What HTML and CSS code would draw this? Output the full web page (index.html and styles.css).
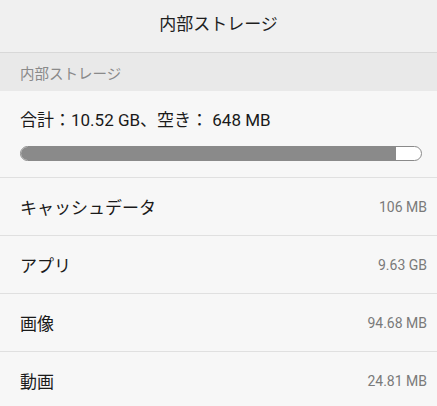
FILE: index.html
```html
<!DOCTYPE html>
<html lang="ja">
<head>
<meta charset="utf-8">
<link rel="stylesheet" href="styles.css">
</head>
<body>
<div class="screen">
  <header class="title-bar">内部ストレージ</header>
  <div class="section-label">内部ストレージ</div>
  <div class="summary">
    <div class="summary-text">合計：10.52 GB、空き： 648 MB</div>
    <div class="bar"><div class="bar-fill" style="width: 93.8%"></div></div>
  </div>
  <ul class="list">
    <li class="row"><span class="label">キャッシュデータ</span><span class="value">106 MB</span></li>
    <li class="row"><span class="label">アプリ</span><span class="value">9.63 GB</span></li>
    <li class="row"><span class="label">画像</span><span class="value">94.68 MB</span></li>
    <li class="row"><span class="label">動画</span><span class="value">24.81 MB</span></li>
  </ul>
</div>
</body>
</html>
```
FILE: styles.css
```css
html, body {
  margin: 0;
  padding: 0;
  background: #f7f7f7;
}
body {
  font-family: Roboto, "Noto Sans CJK JP", sans-serif;
  color: #1a1a1a;
}
.screen {
  width: 437px;
  height: 406px;
  overflow: hidden;
  background: #f7f7f7;
}
.title-bar {
  height: 44px;
  padding-bottom: 8px;
  border-bottom: 1px solid #d8d8d8;
  background: #f0f0f0;
  display: flex;
  align-items: center;
  justify-content: center;
  font-size: 17px;
  color: #1e1e1e;
}
.section-label {
  height: 38px;
  background: #e9e9e9;
  display: flex;
  align-items: center;
  padding-left: 20px;
  font-size: 14.5px;
  color: #8a8a8a;
}
.summary {
  padding: 18px 15px 16px 20px;
  border-bottom: 1px solid #e0e0e0;
  display: flex;
  flex-direction: column;
  gap: 15px;
}
.summary-text {
  font-size: 17px;
  line-height: 22px;
  color: #1a1a1a;
}
.bar {
  height: 13px;
  border: 1px solid #8a8a8a;
  border-radius: 8px;
  background: #ffffff;
  overflow: hidden;
}
.bar-fill {
  height: 100%;
  background: #8a8a8a;
}
.list {
  list-style: none;
  margin: 0;
  padding: 0;
}
.row {
  height: 57px;
  border-bottom: 1px solid #e0e0e0;
  display: flex;
  align-items: center;
  justify-content: space-between;
  padding: 0 10px 0 20px;
}
.label {
  font-size: 17px;
  color: #1a1a1a;
}
.value {
  font-size: 14px;
  color: #7a7a7a;
}
```
